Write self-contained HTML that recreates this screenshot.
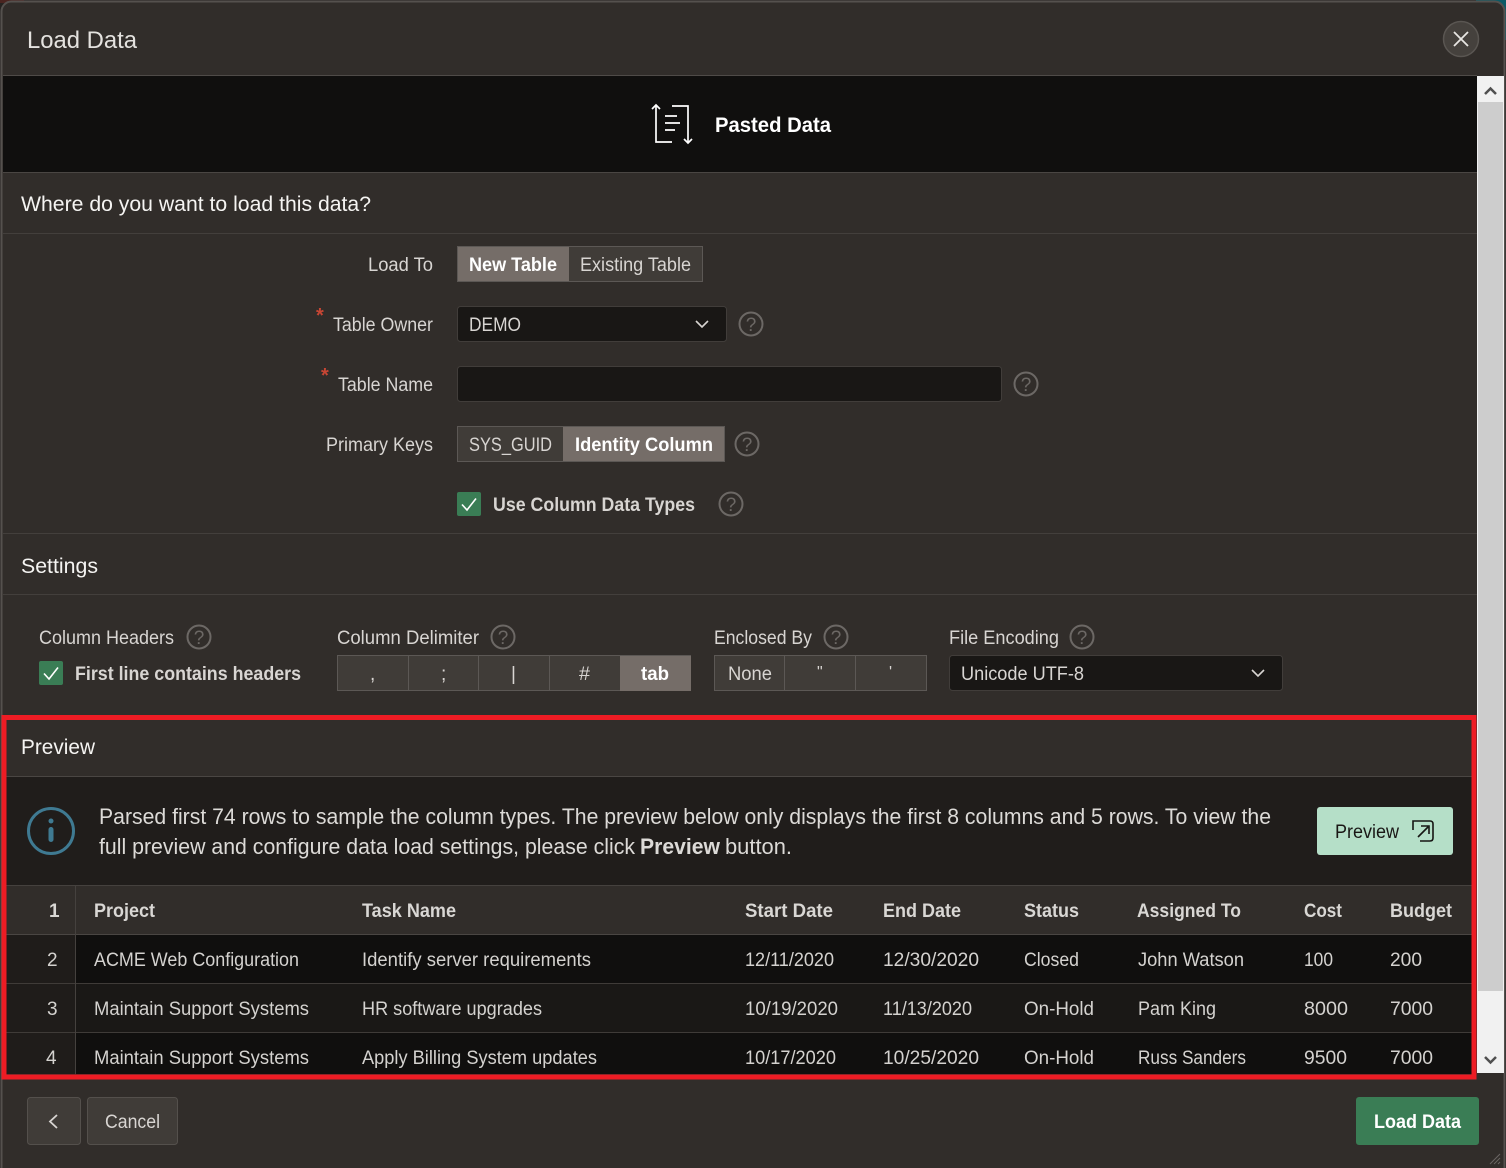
<!DOCTYPE html>
<html lang="en"><head><meta charset="utf-8"><title>Load Data</title>
<style>
html,body{margin:0;padding:0;background:#1a1816;width:1506px;height:1168px;overflow:hidden}
svg{display:block}
text{font-family:"Liberation Sans",sans-serif;font-size:19px;fill:#d8d5d2;white-space:pre}
.b{font-weight:700}
.w{fill:#fff}
.h{font-size:21px;fill:#f5f4f2}
.t{font-size:19px;fill:#d4d2cf}
.th{font-size:19px;font-weight:700;fill:#d9d7d4}
.n{font-size:22px;fill:#dcdad7}
.hp{fill:none;stroke:#6c6865;stroke-width:2}
.q{font-size:19px;fill:#6c6865;text-anchor:middle}
</style></head><body>
<svg width="1506" height="1168" viewBox="0 0 1506 1168" xmlns="http://www.w3.org/2000/svg">
<rect width="1506" height="1168" fill="#262321"/>
<rect x="1476" y="0" width="30" height="40" fill="#0b5a66"/>
<rect x="0" y="0" width="24" height="3" fill="#4a2420"/>
<rect x="1.5" y="1.5" width="1503" height="1180" rx="10" fill="#312d2a" stroke="#55514e" stroke-width="2"/>
<!-- head -->
<text x="27" y="48" font-size="24" style="font-size:24px;fill:#e4e2df" textLength="110" lengthAdjust="spacingAndGlyphs">Load Data</text>
<circle cx="1461" cy="39" r="17.5" fill="#45413d" stroke="#5a5652" stroke-width="1.5"/>
<path d="M1454 32L1468 46M1468 32L1454 46" stroke="#e8e6e3" stroke-width="1.8" fill="none"/>
<rect x="3" y="75" width="1474" height="1" fill="#4f4b48"/>
<rect x="3" y="76" width="1474" height="96" fill="#100f0e"/>
<rect x="3" y="172" width="1474" height="1" fill="#4a4643"/>
<!-- pasted icon -->
<g fill="none" stroke="#fff" stroke-width="1.7">
<path d="M656 106V142H672"/><path d="M652 109L656 105L660 109"/>
<path d="M672 106H688V142"/><path d="M684 139L688 143L692 139"/>
<path d="M665 116H677M665 123H680M665 130H675"/>
</g>
<text x="715" y="132" class="b w" style="font-size:21px" textLength="116" lengthAdjust="spacingAndGlyphs">Pasted Data</text>
<!-- section 1 -->
<text x="21" y="211" class="h" textLength="350" lengthAdjust="spacingAndGlyphs">Where do you want to load this data?</text>
<rect x="3" y="233" width="1474" height="1" fill="#433f3c"/>
<text x="368" y="271" textLength="65" lengthAdjust="spacingAndGlyphs">Load To</text>
<rect x="457.500" y="246.500" width="245" height="35" fill="#403c38" stroke="#5c5855"/>
<rect x="458" y="247" width="111" height="34" fill="#756d68"/>
<text x="469" y="271" class="b w" textLength="88" lengthAdjust="spacingAndGlyphs">New Table</text>
<text x="580" y="271" textLength="111" lengthAdjust="spacingAndGlyphs">Existing Table</text>

<text x="316" y="322" style="font-size:20px;fill:#c74634" class="b">*</text>
<text x="333" y="331" textLength="100" lengthAdjust="spacingAndGlyphs">Table Owner</text>
<rect x="457.500" y="306.500" width="269" height="35" rx="3" fill="#191715" stroke="#413d3a"/>
<text x="469" y="331" textLength="52" lengthAdjust="spacingAndGlyphs">DEMO</text>
<path d="M696 321L702 327L708 321" fill="none" stroke="#d8d5d2" stroke-width="1.6"/>
<circle class="hp" cx="751" cy="324" r="11.500"/><text class="q" x="751" y="331">?</text>

<text x="321" y="382" style="font-size:20px;fill:#c74634" class="b">*</text>
<text x="338" y="391" textLength="95" lengthAdjust="spacingAndGlyphs">Table Name</text>
<rect x="457.500" y="366.500" width="544" height="35" rx="3" fill="#191715" stroke="#413d3a"/>
<circle class="hp" cx="1026" cy="384" r="11.500"/><text class="q" x="1026" y="391">?</text>

<text x="326" y="451" textLength="107" lengthAdjust="spacingAndGlyphs">Primary Keys</text>
<rect x="457.500" y="426.500" width="267" height="35" fill="#403c38" stroke="#5c5855"/>
<rect x="563" y="427" width="161" height="34" fill="#756d68"/>
<text x="469" y="451" textLength="83" lengthAdjust="spacingAndGlyphs">SYS_GUID</text>
<text x="575" y="451" class="b w" textLength="138" lengthAdjust="spacingAndGlyphs">Identity Column</text>
<circle class="hp" cx="747" cy="444" r="11.500"/><text class="q" x="747" y="451">?</text>

<rect x="457" y="492" width="24" height="24" rx="2" fill="#3a7d55"/>
<path d="M462 504.500L467 510L476 498.500" fill="none" stroke="#fff" stroke-width="1.600"/>
<text x="493" y="511" class="b" textLength="202" lengthAdjust="spacingAndGlyphs">Use Column Data Types</text>
<circle class="hp" cx="731" cy="504" r="11.500"/><text class="q" x="731" y="511">?</text>

<rect x="3" y="533" width="1474" height="1" fill="#433f3c"/>
<text x="21" y="573" class="h" textLength="77" lengthAdjust="spacingAndGlyphs">Settings</text>
<rect x="3" y="594" width="1474" height="1" fill="#433f3c"/>

<text x="39" y="644" textLength="135" lengthAdjust="spacingAndGlyphs">Column Headers</text>
<circle class="hp" cx="199" cy="637" r="11.500"/><text class="q" x="199" y="644">?</text>
<rect x="39" y="661" width="24" height="24" rx="2" fill="#3a7d55"/>
<path d="M44 673.500L49 679L58 667.500" fill="none" stroke="#fff" stroke-width="1.600"/>
<text x="75" y="680" class="b" textLength="226" lengthAdjust="spacingAndGlyphs">First line contains headers</text>

<text x="337" y="644" textLength="142" lengthAdjust="spacingAndGlyphs">Column Delimiter</text>
<circle class="hp" cx="503" cy="637" r="11.500"/><text class="q" x="503" y="644">?</text>
<rect x="337.500" y="655.500" width="353" height="35" fill="#403c38" stroke="#5c5855"/>
<path d="M408.500 656V690M478.500 656V690M549.500 656V690" stroke="#5c5855"/>
<rect x="620" y="656" width="71" height="35" fill="#756d68"/>
<text x="370" y="680">,</text><text x="441" y="680">;</text><text x="511" y="680">|</text><text x="579" y="680" textLength="11" lengthAdjust="spacingAndGlyphs">#</text>
<text x="641" y="680" class="b w" textLength="28" lengthAdjust="spacingAndGlyphs">tab</text>

<text x="714" y="644" textLength="98" lengthAdjust="spacingAndGlyphs">Enclosed By</text>
<circle class="hp" cx="836" cy="637" r="11.500"/><text class="q" x="836" y="644">?</text>
<rect x="714.500" y="655.500" width="212" height="35" fill="#403c38" stroke="#5c5855"/>
<path d="M784.500 656V690M855.500 656V690" stroke="#5c5855"/>
<text x="728" y="680" textLength="44" lengthAdjust="spacingAndGlyphs">None</text>
<text x="817" y="677" style="font-size:16px">"</text><text x="889" y="677" style="font-size:16px">'</text>

<text x="949" y="644" textLength="110" lengthAdjust="spacingAndGlyphs">File Encoding</text>
<circle class="hp" cx="1082" cy="637" r="11.500"/><text class="q" x="1082" y="644">?</text>
<rect x="949.500" y="655.500" width="333" height="35" rx="3" fill="#191715" stroke="#413d3a"/>
<text x="961" y="680" textLength="123" lengthAdjust="spacingAndGlyphs">Unicode UTF-8</text>
<path d="M1252 670L1258 676L1264 670" fill="none" stroke="#d8d5d2" stroke-width="1.600"/>

<!-- preview -->
<text x="21" y="754" class="h" textLength="74" lengthAdjust="spacingAndGlyphs">Preview</text>
<rect x="6" y="776" width="1466" height="1" fill="#4a4643"/>
<rect x="6" y="777" width="1466" height="108" fill="#201d1b"/>
<circle cx="51" cy="831" r="22.500" fill="none" stroke="#3f7a92" stroke-width="3"/>
<circle cx="51" cy="821" r="2.500" fill="#3f7a92"/>
<rect x="48.500" y="827" width="5" height="15" rx="2.500" fill="#3f7a92"/>
<text x="99" y="824" class="n" textLength="1172" lengthAdjust="spacingAndGlyphs">Parsed first 74 rows to sample the column types. The preview below only displays the first 8 columns and 5 rows. To view the</text>
<text x="99" y="854" class="n" textLength="536" lengthAdjust="spacingAndGlyphs">full preview and configure data load settings, please click</text>
<text x="640" y="854" class="n b" textLength="80" lengthAdjust="spacingAndGlyphs">Preview</text>
<text x="725" y="854" class="n" textLength="67" lengthAdjust="spacingAndGlyphs">button.</text>
<rect x="1317" y="807" width="136" height="48" rx="3" fill="#b5dfc8"/>
<text x="1335" y="838" style="fill:#1a1816" textLength="64" lengthAdjust="spacingAndGlyphs">Preview</text>
<g fill="none" stroke="#161513" stroke-width="1.600">
<path d="M1420 821H1413V830M1420 841H1430Q1433 841 1433 838V824Q1433 821 1430 821H1420"/>
<path d="M1418 837L1428 827M1421 826H1429V834"/>
</g>
<!-- table -->
<rect x="6" y="885" width="1466" height="1" fill="#45413e"/>
<rect x="6" y="886" width="1466" height="48" fill="#312d2a"/>
<rect x="6" y="935" width="1466" height="48" fill="#100f0e"/>
<rect x="6" y="984" width="1466" height="48" fill="#1a1816"/>
<rect x="6" y="1033" width="1466" height="41" fill="#100f0e"/>
<rect x="6" y="935" width="69" height="139" fill="#1f1c1a"/>
<rect x="6" y="934" width="1466" height="1" fill="#4a4643"/>
<rect x="6" y="983" width="1466" height="1" fill="#3f3b38"/>
<rect x="6" y="1032" width="1466" height="1" fill="#3f3b38"/>
<rect x="75" y="886" width="1" height="188" fill="#45413e"/>

<text x="49" y="917" class="th">1</text>
<text x="94" y="917" class="th" textLength="61" lengthAdjust="spacingAndGlyphs">Project</text>
<text x="362" y="917" class="th" textLength="94" lengthAdjust="spacingAndGlyphs">Task Name</text>
<text x="745" y="917" class="th" textLength="88" lengthAdjust="spacingAndGlyphs">Start Date</text>
<text x="883" y="917" class="th" textLength="78" lengthAdjust="spacingAndGlyphs">End Date</text>
<text x="1024" y="917" class="th" textLength="55" lengthAdjust="spacingAndGlyphs">Status</text>
<text x="1137" y="917" class="th" textLength="104" lengthAdjust="spacingAndGlyphs">Assigned To</text>
<text x="1304" y="917" class="th" textLength="38" lengthAdjust="spacingAndGlyphs">Cost</text>
<text x="1390" y="917" class="th" textLength="62" lengthAdjust="spacingAndGlyphs">Budget</text>

<text x="47" y="966" class="t">2</text>
<text x="94" y="966" class="t" textLength="205" lengthAdjust="spacingAndGlyphs">ACME Web Configuration</text>
<text x="362" y="966" class="t" textLength="229" lengthAdjust="spacingAndGlyphs">Identify server requirements</text>
<text x="745" y="966" class="t" textLength="89" lengthAdjust="spacingAndGlyphs">12/11/2020</text>
<text x="883" y="966" class="t" textLength="96" lengthAdjust="spacingAndGlyphs">12/30/2020</text>
<text x="1024" y="966" class="t" textLength="55" lengthAdjust="spacingAndGlyphs">Closed</text>
<text x="1138" y="966" class="t" textLength="106" lengthAdjust="spacingAndGlyphs">John Watson</text>
<text x="1304" y="966" class="t" textLength="29" lengthAdjust="spacingAndGlyphs">100</text>
<text x="1390" y="966" class="t" textLength="32" lengthAdjust="spacingAndGlyphs">200</text>

<text x="47" y="1015" class="t">3</text>
<text x="94" y="1015" class="t" textLength="215" lengthAdjust="spacingAndGlyphs">Maintain Support Systems</text>
<text x="362" y="1015" class="t" textLength="180" lengthAdjust="spacingAndGlyphs">HR software upgrades</text>
<text x="745" y="1015" class="t" textLength="93" lengthAdjust="spacingAndGlyphs">10/19/2020</text>
<text x="883" y="1015" class="t" textLength="89" lengthAdjust="spacingAndGlyphs">11/13/2020</text>
<text x="1024" y="1015" class="t" textLength="70" lengthAdjust="spacingAndGlyphs">On-Hold</text>
<text x="1138" y="1015" class="t" textLength="78" lengthAdjust="spacingAndGlyphs">Pam King</text>
<text x="1304" y="1015" class="t" textLength="44" lengthAdjust="spacingAndGlyphs">8000</text>
<text x="1390" y="1015" class="t" textLength="43" lengthAdjust="spacingAndGlyphs">7000</text>

<text x="46" y="1064" class="t">4</text>
<text x="94" y="1064" class="t" textLength="215" lengthAdjust="spacingAndGlyphs">Maintain Support Systems</text>
<text x="362" y="1064" class="t" textLength="235" lengthAdjust="spacingAndGlyphs">Apply Billing System updates</text>
<text x="745" y="1064" class="t" textLength="91" lengthAdjust="spacingAndGlyphs">10/17/2020</text>
<text x="883" y="1064" class="t" textLength="96" lengthAdjust="spacingAndGlyphs">10/25/2020</text>
<text x="1024" y="1064" class="t" textLength="70" lengthAdjust="spacingAndGlyphs">On-Hold</text>
<text x="1138" y="1064" class="t" textLength="108" lengthAdjust="spacingAndGlyphs">Russ Sanders</text>
<text x="1304" y="1064" class="t" textLength="43" lengthAdjust="spacingAndGlyphs">9500</text>
<text x="1390" y="1064" class="t" textLength="43" lengthAdjust="spacingAndGlyphs">7000</text>

<rect x="3" y="1074" width="1474" height="6" fill="#312d2a"/>
<!-- red outline -->
<rect x="4" y="717.500" width="1470" height="359.500" fill="none" stroke="#ed1c24" stroke-width="5"/>
<!-- scrollbar -->
<rect x="1477" y="76" width="27" height="997" fill="#f1f1f1"/>
<rect x="1478" y="102" width="25" height="889" fill="#cdcdcd"/>
<path d="M1485 94L1490.500 88.500L1496 94" fill="none" stroke="#505050" stroke-width="2.500"/>
<path d="M1485 1057L1490.500 1062.500L1496 1057" fill="none" stroke="#505050" stroke-width="2.500"/>
<!-- footer -->
<rect x="27.500" y="1097.500" width="53" height="47" rx="3" fill="#403c38" stroke="#54504c"/>
<path d="M57 1115L50 1121.500L57 1128" fill="none" stroke="#d8d5d2" stroke-width="1.800"/>
<rect x="87.500" y="1097.500" width="90" height="47" rx="3" fill="#403c38" stroke="#54504c"/>
<text x="105" y="1128" textLength="55" lengthAdjust="spacingAndGlyphs">Cancel</text>
<rect x="1356" y="1097" width="123" height="48" rx="3" fill="#3a7d55"/>
<text x="1374" y="1128" class="b w" textLength="87" lengthAdjust="spacingAndGlyphs">Load Data</text>
<path d="M1490 1164L1500 1154M1494 1164L1500 1158M1498 1164L1500 1162" stroke="#6a6663" stroke-width="1"/>
</svg>
</body></html>
